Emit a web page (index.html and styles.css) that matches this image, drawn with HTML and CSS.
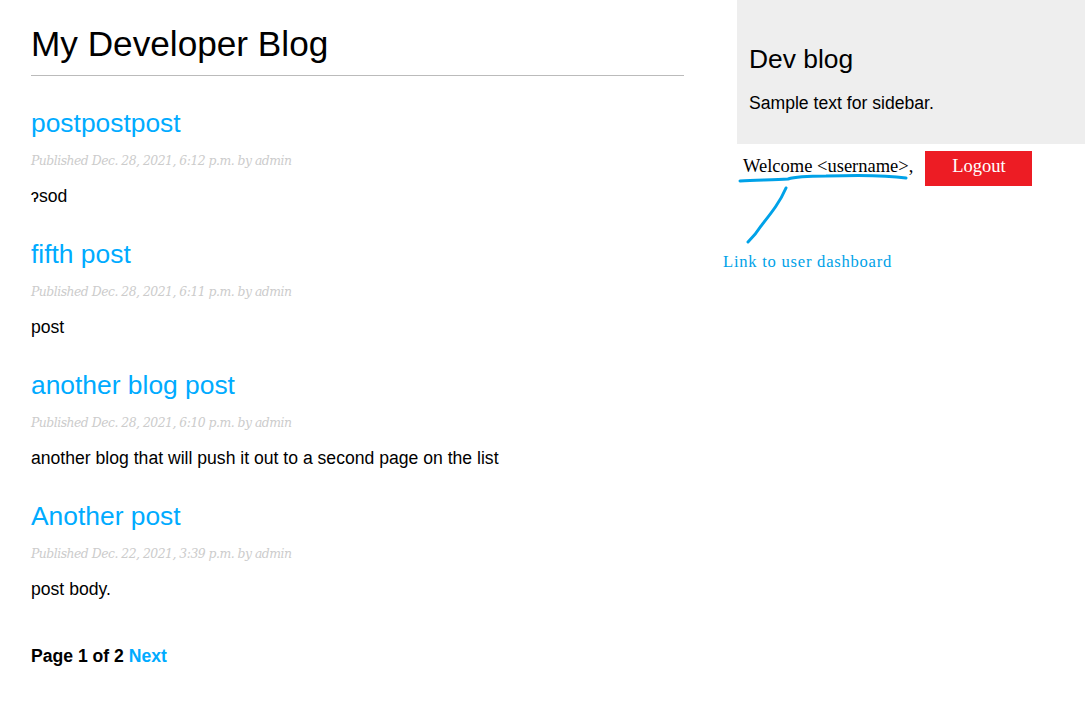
FILE: index.html
```html
<!DOCTYPE html>
<html lang="en">
<head>
<meta charset="utf-8">
<title>My Developer Blog</title>
<link rel="stylesheet" href="styles.css">
</head>
<body>
<div class="layout">
  <main class="content">
    <h1>My Developer Blog</h1>
    <article class="post">
      <h2><a href="#">postpostpost</a></h2>
      <p class="date">Published Dec. 28, 2021, 6:12 p.m. by admin</p>
      <p>ɂsod</p>
    </article>
    <article class="post">
      <h2><a href="#">fifth post</a></h2>
      <p class="date">Published Dec. 28, 2021, 6:11 p.m. by admin</p>
      <p>post</p>
    </article>
    <article class="post">
      <h2><a href="#">another blog post</a></h2>
      <p class="date">Published Dec. 28, 2021, 6:10 p.m. by admin</p>
      <p>another blog that will push it out to a second page on the list</p>
    </article>
    <article class="post">
      <h2><a href="#">Another post</a></h2>
      <p class="date">Published Dec. 22, 2021, 3:39 p.m. by admin</p>
      <p>post body.</p>
    </article>
    <div class="pagination">
      <span class="current">Page 1 of 2</span>
      <a href="#">Next</a>
    </div>
  </main>
  <aside class="side">
    <div class="sidebar">
      <h2>Dev blog</h2>
      <p>Sample text for sidebar.</p>
    </div>
    <div class="user">
      <span class="welcome">Welcome &lt;username&gt;,</span>
      <a class="logout" href="#">Logout</a>
      <svg class="pen" width="200" height="100" viewBox="0 0 200 100" aria-hidden="true">
        <path d="M4 31 C20 30 38 30 52 29 C58 27 66 26 90 26 C120 25 150 25 170 28" fill="none" stroke="#00a2e8" stroke-width="3" stroke-linecap="round"/>
        <path d="M50 38 C44 52 36 62 25 76 C20 84 16 88 12 92" fill="none" stroke="#00a2e8" stroke-width="3" stroke-linecap="round"/>
      </svg>
      <span class="note">Link to user dashboard</span>
    </div>
  </aside>
</div>
</body>
</html>
```
FILE: styles.css
```css
html, body {
  margin: 0;
  padding: 0;
}
body {
  font-family: "Liberation Sans", Arial, Helvetica, sans-serif;
  color: #000;
  background: #fff;
}
a {
  color: #00abff;
  text-decoration: none;
}
.layout {
  display: flex;
  align-items: flex-start;
}
.content {
  width: 653px;
  padding-left: 31px;
}
h1 {
  font-size: 35.2px;
  font-weight: normal;
  margin: 23.6px 0;
  padding: 0 0 11px 0;
  border-bottom: 1px solid #bbb;
}
h2 {
  font-size: 26.4px;
  font-weight: normal;
  margin: 32.5px 0 0;
}
p {
  font-size: 17.6px;
  margin: 17.3px 0;
}
.date {
  color: #ccc;
  font-family: "DejaVu Serif", Georgia, serif;
  font-style: italic;
  font-size: 12.4px;
  margin: 14.2px 0 14.7px;
  letter-spacing: -0.5px;
}
.pagination {
  margin: 46px 0 44px;
  font-size: 17.6px;
  font-weight: bold;
}
.side {
  margin-left: auto;
  margin-right: 5px;
  width: 348px;
}
.sidebar {
  background: #eee;
  padding: 11px 11px 12.5px 12px;
}
.sidebar h2 {
  margin-top: 33px;
}
.sidebar p {
  margin: 17.6px 0;
}
.user {
  position: relative;
  display: flex;
  align-items: flex-start;
  padding: 7.5px 0 0 6px;
  height: 140px;
}
.welcome {
  font-family: "Liberation Serif", "Times New Roman", serif;
  font-size: 18.5px;
  color: #000;
  margin-top: 5px;
}
.logout {
  box-sizing: border-box;
  margin-left: 12px;
  width: 107px;
  height: 35px;
  padding-bottom: 4px;
  background: #ed1c24;
  color: #fff;
  font-family: "Liberation Serif", "Times New Roman", serif;
  font-size: 18.5px;
  display: flex;
  align-items: center;
  justify-content: center;
}
.pen {
  position: absolute;
  left: -1px;
  top: 6px;
  overflow: visible;
}
.note {
  position: absolute;
  left: -14px;
  top: 108px;
  font-family: "Liberation Serif", "Times New Roman", serif;
  font-size: 16.6px;
  letter-spacing: 0.75px;
  color: #00a2e8;
}
```
